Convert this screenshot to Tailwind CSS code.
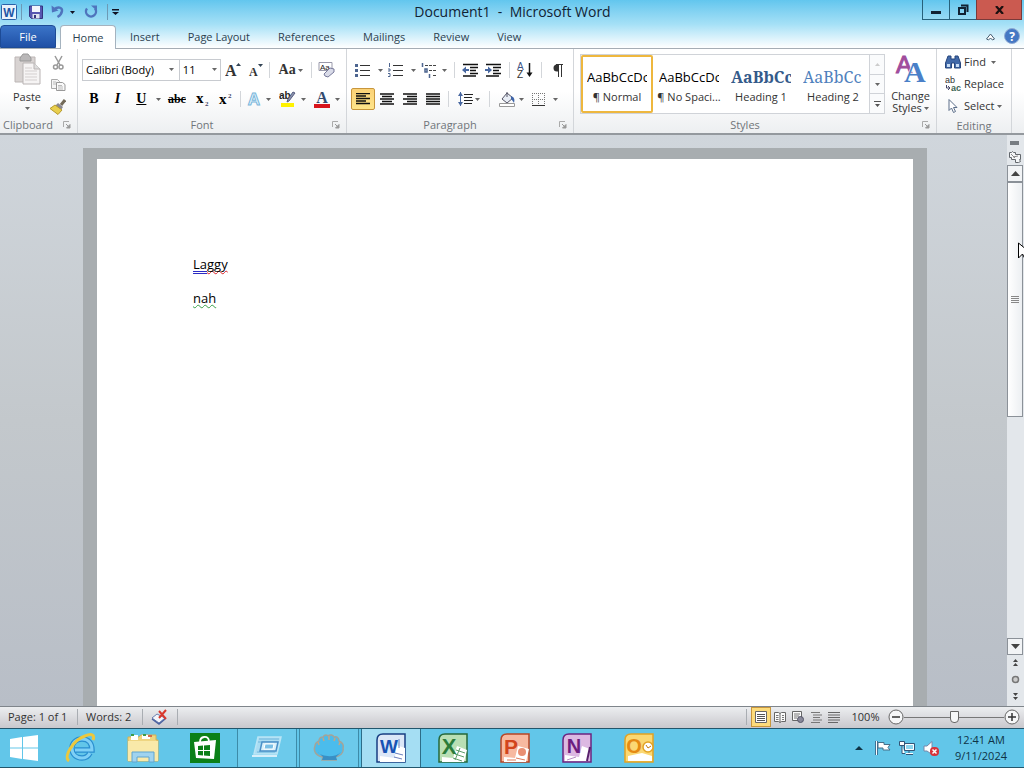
<!DOCTYPE html>
<html lang="en">
<head>
    <meta charset="UTF-8">
    <meta name="viewport" content="width=device-width, initial-scale=1.0">
    <title>Document1 - Microsoft Word</title>
    <script src="https://cdn.jsdelivr.net/npm/@tailwindcss/browser@4"></script>
</head>
<body class="h-screen flex flex-col overflow-hidden font-['Open_Sans','Noto_Sans',sans-serif] text-[11px] leading-4 text-[#333] bg-[#c5cad0]">

    <!-- Shared icons -->
    <svg class="hidden">
        <symbol id="caret" viewBox="0 0 5 3"><path d="M0 0h5L2.500 3z" fill="#666"/></symbol>
        <symbol id="launcher" viewBox="0 0 8 8"><path d="M.5 6V.5H6" fill="none" stroke="#aaa"/><path d="M3 3l3 3M7 3.500V7H3.500z" fill="#999" stroke="#999"/></symbol>
    </svg>

    <!-- Title bar and tabs -->
    <header class="shrink-0 bg-linear-to-b from-[#62c6ee] via-[#a4e0f6] to-white border-b border-[#a5adb5]">
        <div class="h-6 flex items-start">
            <div class="flex-1 h-6 flex items-center pl-px">
                <svg class="w-4 h-4" viewBox="0 0 16 16"><rect x=".5" y=".5" width="15" height="15" rx="1" fill="#e8f2fc" stroke="#2a62a8"/><text x="8" y="12.500" text-anchor="middle" font-family="Liberation Sans" font-weight="bold" font-size="12" fill="#1d56a5">W</text></svg>
                <span class="w-px h-4 ml-1 bg-[#6d9ab5]"></span>
                <button class="ml-1.5" aria-label="Save"><svg class="w-4 h-4" viewBox="0 0 16 16"><path d="M1.500 2h13v12.500h-11l-2-2z" fill="#5756b0" stroke="#34347e"/><path d="M4 2h8v6H4z" fill="#f2f5fc"/><path d="M4.500 10h7v4.500h-7z" fill="#dfe3ef"/><path d="M6 11h2v3H6z" fill="#34347e"/></svg></button>
                <button class="ml-1.5 flex items-center gap-1" aria-label="Undo"><svg class="w-4 h-4" viewBox="0 0 16 16"><path d="M4 5.500c4-3.500 8.500-2 8 1.500-.3 2.500-2 4.500-4.500 6" fill="none" stroke="#4f74bd" stroke-width="2.400"/><path d="M1.500 1.500l.5 7 6.500-2z" fill="#4f74bd"/></svg><svg class="w-[5px] h-[3px]"><path d="M0 0h5L2.500 3z" fill="#112"/></svg></button>
                <button class="ml-2" aria-label="Repeat"><svg class="w-4 h-4" viewBox="0 0 16 16"><path d="M4 4.500a5 5 0 1 0 8 0" fill="none" stroke="#4f74bd" stroke-width="2.400"/><path d="M8 1.500h6V7z" fill="#4f74bd"/></svg></button>
                <span class="w-px h-4 ml-2 bg-[#6d9ab5]"></span>
                <button class="ml-1" aria-label="Customize toolbar"><svg class="w-[7px] h-[6px]"><path d="M0 0h7v1.500H0zM0 3h7L3.500 6z" fill="#112"/></svg></button>
            </div>
            <h1 class="h-6 pt-px text-sm leading-[22px] text-[#123]">Document1&nbsp; -&nbsp; Microsoft Word</h1>
            <div class="flex-1 flex justify-end">
                <button class="w-7 h-5 border border-t-0 border-[#27617b] grid place-items-center" aria-label="Minimize"><svg class="w-[10px] h-[8px]"><path d="M0 5h10v3H0z" fill="#123"/></svg></button>
                <button class="w-[26px] h-5 border-b border-[#27617b] grid place-items-center" aria-label="Restore"><svg class="w-[11px] h-[11px]"><path d="M1 4h6v6H1zM3 1.500h6.500V8" fill="none" stroke="#123" stroke-width="2"/></svg></button>
                <button class="w-[46px] mr-0.5 h-5 border border-t-0 border-[#7a3a3a] bg-[#cb5a50] grid place-items-center" aria-label="Close"><svg class="w-[9px] h-[8px]"><path d="M1 0l7 8M8 0L1 8" stroke="#1c1010" stroke-width="2.200"/></svg></button>
            </div>
        </div>
        <nav class="h-6 flex items-stretch text-[#2c3f50]">
            <button class="w-14 mt-px mr-1 rounded-t-sm bg-linear-to-b from-[#3b74c8] to-[#1f50a6] border border-[#1d4b96] text-white">File</button>
            <button class="w-14 -mb-px mt-px rounded-t-sm bg-white border border-b-0 border-[#a5b3bf]">Home</button>
            <button class="px-[14px] pt-0.5">Insert</button>
            <button class="px-[14px] pt-0.5">Page Layout</button>
            <button class="px-[14px] pt-0.5">References</button>
            <button class="px-[14px] pt-0.5">Mailings</button>
            <button class="px-[14px] pt-0.5">Review</button>
            <button class="px-[14px] pt-0.5">View</button>
            <div class="ml-auto flex items-center gap-2 pr-1">
                <button aria-label="Minimize ribbon"><svg class="w-[11px] h-[9px]"><path d="M1.500 7L5.500 2l4 5-2 1-2-2-2 2z" fill="#fff" stroke="#445c70"/></svg></button>
                <button aria-label="Help"><svg class="w-4 h-4" viewBox="0 0 16 16"><circle cx="8" cy="8" r="7.500" fill="#4478c4" stroke="#8fa9d2"/><text x="8" y="12.500" text-anchor="middle" font-family="Open Sans" font-weight="bold" font-size="12" fill="#fff">?</text></svg></button>
            </div>
        </nav>
    </header>

    <!-- Ribbon -->
    <section class="h-[86px] shrink-0 flex bg-linear-to-b from-white from-50% to-[#edeff1] border-b-2 border-[#94999e]">

        <div class="w-[78px] flex flex-col border-r border-[#d3d6da]">
            <div class="flex-1 flex">
                <button class="w-[54px] flex flex-col items-center pt-1">
                    <svg class="w-7 h-8" viewBox="0 0 28 32"><path d="M2 4h20v25H2z" fill="#d8d3d2" stroke="#bcb6b5"/><path d="M7 5l3-4h5l3 4v3H7z" fill="#b9b7b8" stroke="#999"/><path d="M10 10h11l6 6v15H10z" fill="#f6f4f4" stroke="#b9b4b4"/><path d="M21 10v6h6" fill="#ddd" stroke="#b9b4b4"/><path d="M12 15h7M12 18h12M12 21h12M12 24h12M12 27h12" stroke="#d4cfcf"/></svg>
                    <span class="mt-1 leading-4">Paste</span>
                    <svg class="w-[5px] h-[3px] mt-0.5"><use href="#caret"/></svg>
                </button>
                <div class="flex flex-col gap-1.5 pt-1.5">
                    <button aria-label="Cut"><svg class="w-4 h-4 -ml-1" viewBox="0 0 16 16"><path d="M5 1l5 9M12 1L7 10" stroke="#999" stroke-width="1.500"/><circle cx="5.500" cy="12" r="2" fill="none" stroke="#999" stroke-width="1.500"/><circle cx="11" cy="12" r="2" fill="none" stroke="#999" stroke-width="1.500"/></svg></button>
                    <button aria-label="Copy"><svg class="w-4 h-4 -ml-1" viewBox="0 0 16 16"><path d="M1.500 2.500h6l2 2v7h-8z" fill="#f5f5f5" stroke="#aaa"/><path d="M6.500 5.500h6l2.500 2v6H6.500z" fill="#fafafa" stroke="#999"/><path d="M3 5h3M3 7h3M8 8.500h4M8 10h5M8 12h5" stroke="#bbb"/></svg></button>
                    <button aria-label="Format painter"><svg class="w-4 h-4 -ml-1" viewBox="0 0 16 16"><path d="M15 1l-4 5" stroke="#736a59" stroke-width="3"/><path d="M8 4l5 4-2 3-6-4z" fill="#8a8790"/><path d="M5 6l7 5-4 4.500-8-6z" fill="#e9cf4e" stroke="#b59a2e"/></svg></button>
                </div>
            </div>
            <div class="h-[17px] pt-px flex items-center justify-between pl-[3px] pr-1.5 text-[#70757a]">Clipboard<button aria-label="Clipboard options"><svg class="w-2 h-2"><use href="#launcher"/></svg></button></div>
        </div>

        <div class="w-[269px] flex flex-col border-r border-[#d3d6da]">
            <div class="flex-1 px-1 pt-[10px]">
                <div class="h-[22px] flex items-center">
                    <div class="relative w-[99px] h-[22px]">
                        <select aria-label="Font" class="appearance-none w-full h-full pl-[3px] border border-[#c8cbd0] bg-white text-black"><option>Calibri (Body)</option></select>
                        <svg class="absolute right-1.5 top-[9px] w-[5px] h-[3px] pointer-events-none"><use href="#caret"/></svg>
                    </div>
                    <div class="relative w-[42px] h-[22px]">
                        <select aria-label="Font size" class="appearance-none w-full h-full pl-[3px] border border-l-0 border-[#c8cbd0] bg-white text-black"><option>11</option></select>
                        <svg class="absolute right-1 top-[9px] w-[5px] h-[3px] pointer-events-none"><use href="#caret"/></svg>
                    </div>
                    <button class="w-6 grid place-items-center" aria-label="Grow font"><svg class="w-4 h-4"><text x="0" y="14" font-family="Liberation Serif" font-weight="bold" font-size="16" fill="#333">A</text><path d="M11 4l2.500-3L16 4z" fill="#345"/></svg></button>
                    <button class="w-6 pr-1 grid place-items-center" aria-label="Shrink font"><svg class="w-4 h-4"><text x="2" y="14" font-family="Liberation Serif" font-weight="bold" font-size="12" fill="#333">A</text><path d="M11 2h5l-2.500 3z" fill="#345"/></svg></button>
                    <span class="w-px h-4 bg-[#d3d6da]"></span>
                    <button class="w-[42px] flex items-center justify-center gap-0.5 font-['Liberation_Serif'] font-bold text-sm">Aa<svg class="w-[5px] h-[3px]"><use href="#caret"/></svg></button>
                    <span class="w-px h-4 bg-[#d3d6da]"></span>
                    <button class="w-[30px] grid place-items-center" aria-label="Clear formatting"><svg class="w-[18px] h-4"><text x="2" y="8" font-family="Liberation Sans" font-size="8" fill="#222">Aa</text><path d="M1 .5h13v8H1z" fill="none" stroke="#99a"/><path d="M6 12l6-6 4 1v3l-6 5-3-1z" fill="#d9dbe8" stroke="#77799a"/></svg></button>
                </div>
                <div class="h-[22px] mt-[7px] flex items-center font-['Liberation_Serif'] font-bold text-sm text-black">
                    <button class="w-6">B</button>
                    <button class="w-6 italic">I</button>
                    <button class="w-6 underline">U</button>
                    <button class="w-[10px] grid place-items-center" aria-label="Underline style"><svg class="w-[5px] h-[3px]"><use href="#caret"/></svg></button>
                    <button class="w-7 text-xs line-through">abc</button>
                    <button class="w-6 grid place-items-center" aria-label="Subscript"><svg class="w-4 h-4"><text x="1" y="12" font-size="15">x</text><text x="10" y="15" font-size="7" fill="#446">2</text></svg></button>
                    <button class="w-6 grid place-items-center" aria-label="Superscript"><svg class="w-4 h-4"><text x="1" y="13" font-size="15">x</text><text x="10" y="7" font-size="7" fill="#446">2</text></svg></button>
                    <span class="w-px h-4 mx-0.5 bg-[#d3d6da]"></span>
                    <button class="w-8 flex items-center justify-center gap-1" aria-label="Text effects"><svg class="w-4 h-4 overflow-visible"><text x="8" y="14" text-anchor="middle" font-family="Liberation Sans" font-size="17" fill="#e5f5ff" stroke="#7ab6da">A</text></svg><svg class="w-[5px] h-[3px]"><use href="#caret"/></svg></button>
                    <button class="w-9 flex items-center justify-center gap-1" aria-label="Highlight colour"><svg class="w-[18px] h-[18px]"><path d="M2 13h13v4H2z" fill="#fff200"/><text x="0" y="9" font-family="Liberation Sans" font-size="10" fill="#222">ab</text><path d="M16 3l-6 8-2 1 1-3 5-7z" fill="#8c93ad" stroke="#555c80"/></svg><svg class="w-[5px] h-[3px]"><use href="#caret"/></svg></button>
                    <button class="w-8 flex items-center justify-center gap-1" aria-label="Font colour"><svg class="w-[18px] h-[18px]"><text x="9" y="13" text-anchor="middle" font-size="16" fill="#33496e">A</text><path d="M1 14h16v4H1z" fill="#d8141c"/></svg><svg class="w-[5px] h-[3px]"><use href="#caret"/></svg></button>
                </div>
            </div>
            <div class="h-[17px] pt-px flex items-center pr-1.5 text-[#70757a]"><span class="flex-1 pr-1.5 text-center">Font</span><button aria-label="Font options"><svg class="w-2 h-2"><use href="#launcher"/></svg></button></div>
        </div>

        <div class="w-[227px] flex flex-col border-r border-[#d3d6da]">
            <div class="flex-1 px-1 pt-[10px]">
                <div class="h-[22px] flex items-center">
                    <button class="w-[34px] pl-1 flex items-center gap-2" aria-label="Bullets"><svg class="w-[15px] h-[14px] shrink-0"><path d="M5 2.500h10M5 7.500h10M5 12.500h10" stroke="#333"/><path d="M0 1h3v3H0zM0 6h3v3H0zM0 11h3v3H0z" fill="#4d6590"/></svg><svg class="w-[5px] h-[3px]"><use href="#caret"/></svg></button>
                    <button class="w-[34px] pl-1 flex items-center gap-2" aria-label="Numbering"><svg class="w-[15px] h-[14px] shrink-0"><path d="M5 2.500h10M5 7.500h10M5 12.500h10" stroke="#333"/><path d="M1.500 0v4M0 6h2v2H0M0 10.500h2v3H0" fill="none" stroke="#4d6590"/></svg><svg class="w-[5px] h-[3px]"><use href="#caret"/></svg></button>
                    <button class="w-[34px] pl-1 flex items-center gap-1" aria-label="Multilevel list"><svg class="w-[17px] h-[15px] shrink-0"><path d="M4 2.500h12M8 7.500h8M12 12.500h4" stroke="#444" stroke-dasharray="3 1"/><path d="M1.500 0v4M4 6h2v3H4zM8.500 11v4" fill="none" stroke="#4d6590" stroke-width="1.500"/></svg><svg class="w-[5px] h-[3px]"><use href="#caret"/></svg></button>
                    <span class="w-px h-4 mx-1 bg-[#d3d6da]"></span>
                    <button class="w-6 grid place-items-center" aria-label="Decrease indent"><svg class="w-4 h-[14px]"><path d="M1 1.500h15M8 4.500h8M8 7.500h6M8 10.500h8M1 13h13" stroke="#111" stroke-width="1.500"/><path d="M0 7l4-3.500V6h3v2H4v2.500z" fill="#4767a0"/></svg></button>
                    <button class="w-6 grid place-items-center" aria-label="Increase indent"><svg class="w-4 h-[14px]"><path d="M1 1.500h15M8 4.500h8M8 7.500h6M8 10.500h8M1 13h13" stroke="#111" stroke-width="1.500"/><path d="M7 7L3 3.500V6H0v2h3v2.500z" fill="#4767a0"/></svg></button>
                    <span class="w-px h-4 mx-1 bg-[#d3d6da]"></span>
                    <button class="w-6 grid place-items-center" aria-label="Sort"><svg class="w-4 h-4 overflow-visible"><text x="0" y="8" font-family="Liberation Sans" font-size="10" fill="#3e5686">A</text><text x="0" y="16" font-family="Liberation Sans" font-size="10" fill="#333">Z</text><path d="M12.500 1v12" stroke="#111" stroke-width="1.500"/><path d="M9.500 10.500h6l-3 4.500z" fill="#111"/></svg></button>
                    <span class="w-px h-4 mx-1 bg-[#d3d6da]"></span>
                    <button class="w-6 grid place-items-center" aria-label="Show marks"><svg class="w-[11px] h-[13px]"><path d="M10.500.5H5a3.500 3.500 0 0 0 0 7h1V.5z" fill="#333"/><path d="M6.500 0v13M9.500 0v13M4 .5h7" stroke="#333"/></svg></button>
                </div>
                <div class="h-[22px] mt-[7px] flex items-center">
                    <button class="w-6 h-[22px] rounded-xs border border-[#c8963c] bg-linear-to-b from-[#fbd277] to-[#ffe58a] grid place-items-center" aria-label="Align left"><svg class="w-[14px] h-[12px]"><path d="M0 .5h14M0 3h10M0 5.500h14M0 8h10M0 10.500h14" stroke="#111" stroke-width="1.300"/></svg></button>
                    <button class="w-[23px] grid place-items-center" aria-label="Center"><svg class="w-[14px] h-[12px]"><path d="M0 1h14M2 3.500h10M0 6h14M2 8.500h10M0 11h14" stroke="#111" stroke-width="1.300"/></svg></button>
                    <button class="w-[23px] grid place-items-center" aria-label="Align right"><svg class="w-[14px] h-[12px]"><path d="M0 1h14M4 3.500h10M0 6h14M4 8.500h10M0 11h14" stroke="#111" stroke-width="1.300"/></svg></button>
                    <button class="w-[23px] grid place-items-center" aria-label="Justify"><svg class="w-[14px] h-[12px]"><path d="M0 1h14M0 3.500h14M0 6h14M0 8.500h14M0 11h14" stroke="#111" stroke-width="1.300"/></svg></button>
                    <span class="w-px h-4 mx-1 bg-[#d3d6da]"></span>
                    <button class="w-8 flex items-center justify-center gap-0.5" aria-label="Line spacing"><svg class="w-[15px] h-4"><path d="M6 3.500h9M6 6.500h8M6 9.500h9M6 12.500h8" stroke="#222"/><path d="M2.500 1v14" stroke="#4767a0"/><path d="M0 5l2.500-4L5 5zM0 11h5l-2.500 4z" fill="#4767a0"/></svg><svg class="w-[5px] h-[3px]"><use href="#caret"/></svg></button>
                    <span class="w-px h-4 mx-1 bg-[#d3d6da]"></span>
                    <button class="w-[34px] flex items-center justify-center gap-1" aria-label="Shading"><svg class="w-4 h-4"><path d="M3 8l5-6 6 5-6 5z" fill="#e8edf5" stroke="#556"/><path d="M8 1v5" stroke="#556"/><path d="M12 5c3 1 4 3 3 7-1-2-2-3-3-4z" fill="#3e64a8"/><path d="M.5 12.500h15v3H.5z" fill="#fff" stroke="#999"/></svg><svg class="w-[5px] h-[3px]"><use href="#caret"/></svg></button>
                    <button class="w-[34px] flex items-center justify-center gap-2" aria-label="Borders"><svg class="w-[13px] h-[13px]"><path d="M.5 0v12M6.500 0v12M12.500 0v12M0 .5h13M0 6.500h13" stroke="#777" stroke-dasharray="1 1"/><path d="M0 12.500h13" stroke="#333"/></svg><svg class="w-[5px] h-[3px]"><use href="#caret"/></svg></button>
                </div>
            </div>
            <div class="h-[17px] pt-px flex items-center pr-1.5 text-[#70757a]"><span class="flex-1 pr-1.5 text-center">Paragraph</span><button aria-label="Paragraph options"><svg class="w-2 h-2"><use href="#launcher"/></svg></button></div>
        </div>

        <div class="w-[363px] flex flex-col border-r border-[#d3d6da]">
            <div class="flex-1 flex pl-1.5 pt-[5px]">
                <div class="w-[305px] h-[60px] flex items-stretch border border-[#d0d3d8] bg-white text-[#333]">
                    <button class="w-[72px] border-2 border-[#eeb73e] rounded-xs pt-0.5">
                        <span class="block mx-[4px] h-6 overflow-hidden whitespace-nowrap text-left text-[13px] leading-6 text-black">AaBbCcDc</span>
                        <span class="block whitespace-nowrap">¶ Normal</span>
                    </button>
                    <button class="w-[72px] pt-0.5">
                        <span class="block mx-1.5 h-6 overflow-hidden whitespace-nowrap text-left text-[13px] leading-6 text-black">AaBbCcDc</span>
                        <span class="block whitespace-nowrap">¶ No Spaci...</span>
                    </button>
                    <button class="w-[72px] pt-0.5">
                        <span class="block mx-1.5 h-6 overflow-hidden whitespace-nowrap text-left font-['Noto_Serif','DejaVu_Serif',serif] font-bold text-base leading-6 text-[#345a8a]">AaBbCc</span>
                        <span class="block whitespace-nowrap">Heading 1</span>
                    </button>
                    <button class="w-[72px] pt-0.5">
                        <span class="block mx-1.5 h-6 overflow-hidden whitespace-nowrap text-left font-['Noto_Serif','DejaVu_Serif',serif] text-base leading-6 text-[#4f81bd]">AaBbCc</span>
                        <span class="block whitespace-nowrap">Heading 2</span>
                    </button>
                    <div class="flex-1 flex flex-col border-l border-[#d0d3d8] divide-y divide-[#d0d3d8] bg-[#fafbfc]">
                        <button class="flex-1 grid place-items-center" aria-label="Previous styles"><svg class="w-[5px] h-[3px]"><path d="M0 3h5L2.500 0z" fill="#ccc"/></svg></button>
                        <button class="flex-1 grid place-items-center" aria-label="Next styles"><svg class="w-[5px] h-[3px]"><use href="#caret"/></svg></button>
                        <button class="flex-1 grid place-items-center" aria-label="More styles"><svg class="w-[7px] h-[6px]"><path d="M0 0h7v1H0zM1 3h5L3.500 6z" fill="#555"/></svg></button>
                    </div>
                </div>
                <button class="flex-1 flex flex-col items-center leading-3">
                    <svg class="w-8 h-[30px] overflow-visible"><text x="1" y="19" font-family="Liberation Sans" font-size="24" fill="#a04c9c" stroke="#a04c9c">A</text><text x="9" y="28" font-family="Liberation Serif" font-weight="bold" font-size="30" fill="#4a80c8" stroke="#fff" paint-order="stroke">A</text></svg>
                    <span class="mt-1.5">Change</span>
                    <span class="flex items-center gap-0.5">Styles<svg class="w-[5px] h-[3px]"><use href="#caret"/></svg></span>
                </button>
            </div>
            <div class="h-[17px] pt-px flex items-center pr-1.5 text-[#70757a]"><span class="flex-1 pr-1.5 text-center">Styles</span><button aria-label="Style options"><svg class="w-2 h-2"><use href="#launcher"/></svg></button></div>
        </div>

        <div class="w-[75px] flex flex-col border-r border-[#d3d6da]">
            <div class="flex-1 flex flex-col pl-2 pt-0.5">
                <button class="h-[22px] flex items-center gap-[3px]"><svg class="w-4 h-4" viewBox="0 0 16 16"><path d="M3 2h3v3h4V2h3l2.500 7v5H9.500V9h-3v5H.5V9z" fill="#4169a8" stroke="#27467c"/><path d="M2 10h3v3H2zM11 10h3v3h-3z" fill="#c7dcf5"/></svg>Find<svg class="w-[5px] h-[3px] ml-0.5"><use href="#caret"/></svg></button>
                <button class="h-[22px] flex items-center gap-[3px]"><svg class="w-4 h-4" viewBox="0 0 16 16"><text x="0" y="7" font-family="Liberation Sans" font-size="9" fill="#333">ab</text><text x="6" y="15" font-family="Liberation Sans" font-weight="bold" font-size="9" fill="#3d6655">ac</text><path d="M1.500 9v3h3M3 10l2 2-2 2" fill="none" stroke="#446"/></svg>Replace</button>
                <button class="h-[22px] flex items-center gap-[3px]"><svg class="w-4 h-4" viewBox="0 0 16 16"><path d="M4 1.500v11l2.500-2.500 2 4.500 2-1-2-4H12z" fill="#fff" stroke="#5c6f8a"/></svg>Select<svg class="w-[5px] h-[3px]"><use href="#caret"/></svg></button>
            </div>
            <div class="h-[17px] leading-[17px] text-center text-[#70757a]">Editing</div>
        </div>
    </section>

    <!-- Document area -->
    <main class="flex-1 min-h-0 flex">
        <div class="flex-1 overflow-hidden flex justify-center pl-[3px] pt-[13px] bg-linear-to-b from-[#d0d6dc] via-[#c3c8cc] to-[#b8bec7]">
            <div class="w-full max-w-[844px] px-[14px] pt-[11px] bg-[#a8adb0]">
                <article class="h-full bg-white px-24 pt-[94px] text-[13px] leading-[22px] text-black [text-decoration-skip-ink:none]">
                    <p class="mb-3"><span class="underline decoration-double decoration-[#2b2bc4] decoration-1 underline-offset-2">La</span><span class="underline decoration-wavy decoration-[#d8202a] decoration-1 underline-offset-1">ggy</span></p>
                    <p><span class="underline decoration-wavy decoration-[#38a048] decoration-1 underline-offset-1">nah</span></p>
                </article>
            </div>
        </div>
        <aside class="w-[17px] flex flex-col items-start pt-1.5 bg-[#e3e7eb]">
            <div class="w-[9px] h-1 mx-[3px] bg-[#777c82]"></div>
            <button class="mt-[3px] mx-0.5 h-[17px]" aria-label="Ruler"><svg class="w-3 h-3" viewBox="0 0 12 12"><path d="M.5 1.500h2l1-1 1 1h2v2h5v5h-1l1 2-2 1h-3v-3h-4v-2h-2z" fill="#f4f6f8" stroke="#62676c"/><path d="M2 3l4 4M4 6l5-1" stroke="#888"/></svg></button>
            <button class="w-4 h-[17px] border border-[#8b9198] bg-[#f2f4f6] grid place-items-center" aria-label="Scroll up"><svg class="w-[9px] h-[5px]"><path d="M0 5h9L4.500 0z" fill="#444"/></svg></button>
            <div class="w-4 h-[235px] border border-[#8b9198] bg-linear-to-r from-white to-[#eceff2] grid place-items-center"><svg class="w-2 h-[7px]"><path d="M0 .5h8M0 2.500h8M0 4.500h8M0 6.500h8" stroke="#888"/></svg></div>
            <div class="flex-1"></div>
            <button class="w-4 h-[17px] border border-[#8b9198] bg-[#f2f4f6] grid place-items-center" aria-label="Scroll down"><svg class="w-[9px] h-[5px]"><path d="M0 0h9L4.500 5z" fill="#444"/></svg></button>
            <button class="w-4 h-[17px] pb-0.5 grid place-items-center" aria-label="Previous page"><svg class="w-[5px] h-[7px]"><path d="M0 3h5L2.500 0zM0 7h5L2.500 4z" fill="#444"/></svg></button>
            <button class="w-4 h-[17px] pb-0.5 grid place-items-center" aria-label="Browse object"><svg class="w-[9px] h-[9px]"><circle cx="4.500" cy="4.500" r="3" fill="#ccc" stroke="#777" stroke-width="1.500"/></svg></button>
            <button class="w-4 h-[17px] pb-0.5 grid place-items-center" aria-label="Next page"><svg class="w-[5px] h-[7px]"><path d="M0 0h5L2.500 3zM0 4h5L2.500 7z" fill="#444"/></svg></button>
        </aside>
    </main>

    <!-- Status bar -->
    <footer class="h-[22px] pb-px shrink-0 flex items-center border-t border-[#7f858b] bg-linear-to-b from-[#eceef0] to-[#c9c8cd] text-[#333]">
        <span class="w-[78px] pl-2 border-r border-[#a9adb2]">Page: 1 of 1</span>
        <span class="w-[65px] pl-2 border-r border-[#a9adb2]">Words: 2</span>
        <button class="w-[35px] h-4 grid place-items-center border-r border-[#a9adb2]" aria-label="Proofing"><svg class="w-[18px] h-4"><path d="M1 9l5-4 8 4-6 5z" fill="#f3f5fa" stroke="#6b7fb0"/><path d="M1 10l7 5 6-5" fill="none" stroke="#4b62a0" stroke-width="1.500"/><path d="M8 2l7 8M15 1L8 9" stroke="#d9382c" stroke-width="2"/></svg></button>
        <div class="ml-auto flex items-center">
            <span class="w-px h-4 mr-1 bg-[#a9adb2]"></span>
            <button class="w-5 h-5 border border-[#c8963c] bg-[#fddc7c] grid place-items-center" aria-label="Print layout"><svg class="w-3 h-3"><path d="M.5.5h11v11H.5z" fill="#fff" stroke="#666"/><path d="M2 3.500h8M2 5.500h8M2 7.500h8M2 9.500h8" stroke="#555"/></svg></button>
            <button class="w-[18px] grid place-items-center" aria-label="Reading view"><svg class="w-3 h-3"><path d="M.5 1.500h4l1.500 1 1.500-1h4v9h-4L6 11.500l-1.500-1h-4zM6 2.500v9" fill="#fafafa" stroke="#666"/><path d="M2 4.500h2.500M2 6.500h2.500M2 8.500h2.500M8 4.500h2M8 6.500h2M8 8.500h2" stroke="#777"/></svg></button>
            <button class="w-[18px] grid place-items-center" aria-label="Web layout"><svg class="w-3 h-3"><path d="M.5.5h9v9h-9z" fill="#fafafa" stroke="#666"/><path d="M2 3h6M2 5h5M2 7h3" stroke="#777"/><circle cx="8.500" cy="8.500" r="3" fill="#889" stroke="#556"/></svg></button>
            <button class="w-[18px] grid place-items-center" aria-label="Outline"><svg class="w-3 h-3"><path d="M1 1.500h9M3 4h9M3 6.500h7M3 9h9M1 11.500h9" stroke="#777"/></svg></button>
            <button class="w-[18px] grid place-items-center" aria-label="Draft"><svg class="w-3 h-3"><path d="M0 1.500h12M0 4h12M0 6.500h12M0 9h12M0 11.500h10" stroke="#666"/></svg></button>
            <span class="w-[45px] text-center">100%</span>
            <button aria-label="Zoom out"><svg class="w-4 h-4"><circle cx="8" cy="8" r="7" fill="#f6f7f8" stroke="#666"/><path d="M4 8h8" stroke="#333" stroke-width="1.500"/></svg></button>
            <input type="range" min="0" max="100" value="50" aria-label="Zoom" class="appearance-none w-[100px] h-3 bg-[linear-gradient(#777,#777),linear-gradient(#888,#888)] bg-[size:100%_1px,1px_7px] bg-center bg-no-repeat [&::-webkit-slider-thumb]:appearance-none [&::-webkit-slider-thumb]:w-[9px] [&::-webkit-slider-thumb]:h-3 [&::-webkit-slider-thumb]:border [&::-webkit-slider-thumb]:border-[#666] [&::-webkit-slider-thumb]:rounded-b [&::-webkit-slider-thumb]:bg-[#f6f7f8]">
            <button class="pr-1" aria-label="Zoom in"><svg class="w-4 h-4"><circle cx="8" cy="8" r="7" fill="#f6f7f8" stroke="#666"/><path d="M4 8h8M8 4v8" stroke="#333" stroke-width="1.500"/></svg></button>
        </div>
    </footer>

    <!-- Taskbar -->
    <nav class="h-10 shrink-0 flex items-stretch border-t border-b border-[#22566c] bg-[#62c6e9]">
        <button class="w-[51px] pr-1 grid place-items-center" aria-label="Start"><svg class="w-7 h-[26px]" viewBox="0 0 28 26"><path d="M0 4l12-2v10.500H0zM13 2l15-2v12.500H13zM0 13.500h12V24L0 22zM13 13.500h15V26l-15-2z" fill="#fff"/></svg></button>
        <div class="flex gap-0.5">
            <button class="w-[60px] grid place-items-center" aria-label="Internet Explorer"><svg class="w-8 h-8" viewBox="0 0 32 32"><path d="M25 21c-2 4-5 5-8 5-6 0-10-4-10-9.500S11 7 17 7s10 4 10 11H10" fill="none" stroke="#2a8fd0" stroke-width="5.500"/><path d="M25 21c-2 4-5 5-8 5-6 0-10-4-10-9.500S11 7 17 7s10 4 10 11H10" fill="none" stroke="#7fd0f6" stroke-width="3"/><path d="M4 29C-2 25 8 8 20 4c7-3 10-1 8 4" fill="none" stroke="#ecc83c" stroke-width="3"/></svg></button>
            <button class="w-[60px] grid place-items-center" aria-label="File Explorer"><svg class="w-8 h-8" viewBox="0 0 32 32"><path d="M1 5h11l2-2h15v5h2v21H1z" fill="#efd581" stroke="#d6b353"/><path d="M4 3h7v5H4zM15 3h8v4h-8z" fill="#fff"/><path d="M4 3h3M16 3h3" stroke="#3d9c4a" stroke-width="2"/><path d="M21 4h4" stroke="#d66b4a" stroke-width="2"/><path d="M1 9h30v20H1z" fill="#f9e9a9"/><path d="M5 30V20h22v10h-5v-5H10v5z" fill="#9fd3ef" stroke="#5fa5d0"/></svg></button>
            <button class="w-[60px] grid place-items-center" aria-label="Store"><svg class="w-[30px] h-[30px]" viewBox="0 0 30 30"><path d="M0 0h30v30H0z" fill="#0b8018"/><path d="M4 9l22-2-2 19L6 25z" fill="#fff"/><path d="M10 9c0-6 8-7 9-1" fill="none" stroke="#fff" stroke-width="1.800"/><path d="M8 13l5-.5V17H8zM14 12.500l6-.5v5h-6zM8 18h5v4.500L8 22zM14 18h6v5l-6-.5z" fill="#0b8018"/></svg></button>
            <button class="w-[60px] grid place-items-center border-x border-[#3d8ba8] bg-[#6ccaeb]" aria-label="Run"><svg class="w-8 h-7" viewBox="0 0 32 28"><path d="M7 3h23l-4 17H3z" fill="#a9dcf2" stroke="#b9e5f6" stroke-width="1.500"/><path d="M8 5h20M7 8h20M6 18h18" stroke="#6fb5dc"/><path d="M11 8h16l-2 9H9z" fill="#d8f0fa" stroke="#4a90c8" stroke-width="1.500"/><path d="M14 10h9l-1 5h-9z" fill="#79bfe5" stroke="#fff"/><path d="M1 22h25" stroke="#d6effa" stroke-width="2"/></svg></button>
            <button class="w-[60px] grid place-items-center border-x border-[#3d8ba8] bg-[#6ccaeb]" aria-label="Classic Shell"><svg class="w-8 h-7" viewBox="0 0 32 28"><path d="M10 23C3 22 0 17 2 12c0-3 2-4 4-5 0-3 2-4 4-4 2-3 4-2 5-1 2-2 5-1 6 1 3-1 5 1 5 4 3 1 5 4 4 7 1 5-3 8-8 9l1 3H9z" fill="#4bbcec" stroke="#a3a49a" stroke-width="1.500"/><path d="M5 18c3 5 18 6 23 0l-5 5 1 3H9l1-3z" fill="#398fc4"/><path d="M5 8l1 3M10 4l1 3M16 2v4M22 4l-1 3M27 8l-1 3" stroke="#c2a685" stroke-width="1.500"/></svg></button>
            <button class="w-[60px] grid place-items-center border-x border-[#2c6d88] bg-[#a5def3]" aria-label="Word"><svg class="w-[30px] h-[30px]" viewBox="0 0 30 30"><path d="M7 1h22v28H1V7q0-6 6-6z" fill="#dbe7f7" stroke="#183e82" stroke-width="1.500"/><path d="M20 12l9 3v14H4v-6l15 2z" fill="#fff"/><path d="M19 20l8 2M18 24l8 2M23 6v9" stroke="#6b80bd"/><text x="13" y="20" text-anchor="middle" font-family="Liberation Sans" font-weight="bold" font-size="19" fill="#1753b4">W</text></svg></button>
            <button class="w-[60px] grid place-items-center" aria-label="Excel"><svg class="w-[30px] h-[30px]" viewBox="0 0 30 30"><path d="M7 1h22v28H1V7q0-6 6-6z" fill="#b9dfb4" stroke="#26683a" stroke-width="1.500"/><path d="M19 13l10 4-3 12H4v-5l11 1z" fill="#fff"/><path d="M18 17l9 3M17 21l9 3M15 25l9 3M22 15l-5 12" stroke="#5d9e6a"/><text x="11" y="21" text-anchor="middle" font-family="Liberation Sans" font-weight="bold" font-size="22" fill="#2b7c3b">X</text></svg></button>
            <button class="w-[60px] grid place-items-center" aria-label="PowerPoint"><svg class="w-[30px] h-[30px]" viewBox="0 0 30 30"><path d="M7 1h22v28H1V7q0-6 6-6z" fill="#f7b9a0" stroke="#b84524" stroke-width="1.500"/><path d="M18 13l11 3-3 13H4v-5l11 1z" fill="#fff"/><circle cx="22" cy="19" r="4" fill="#e98f72"/><path d="M16 25l9 2M7 27h9" stroke="#e07a58"/><text x="11" y="21" text-anchor="middle" font-family="Liberation Sans" font-weight="bold" font-size="21" fill="#d2451c">P</text></svg></button>
            <button class="w-[60px] grid place-items-center" aria-label="OneNote"><svg class="w-[30px] h-[30px]" viewBox="0 0 30 30"><path d="M7 1h22v28H1V7q0-6 6-6z" fill="#dcb8e2" stroke="#6b2480" stroke-width="1.500"/><path d="M20 13l8 3-2 12H3v-6l14 2z" fill="#fff"/><path d="M28 14l-3 14" stroke="#58206b" stroke-width="2"/><path d="M5 27l9-3" stroke="#b890c4"/><text x="12" y="20" text-anchor="middle" font-family="Liberation Sans" font-weight="bold" font-size="20" fill="#6c1d80">N</text></svg></button>
            <button class="w-[60px] grid place-items-center" aria-label="Outlook"><svg class="w-[30px] h-[30px]" viewBox="0 0 30 30"><path d="M7 1h22v28H1V7q0-6 6-6z" fill="#fbd873" stroke="#e2a223" stroke-width="1.500"/><path d="M4 23l14-3 10 3v5H4z" fill="#fff"/><circle cx="24" cy="14" r="5" fill="#fff" stroke="#e2a223" stroke-width="1.500"/><path d="M22 12l2 3 3-2" fill="none" stroke="#c47c12"/><text x="10" y="20" text-anchor="middle" font-family="Liberation Sans" font-weight="bold" font-size="20" fill="#e58a12">O</text></svg></button>
        </div>
        <div class="ml-auto flex items-center gap-2 pr-[17px] text-[#0e3346]">
            <button class="mr-1" aria-label="Show hidden icons"><svg class="w-2 h-1"><path d="M0 4h8L4 0z" fill="#0e3346"/></svg></button>
            <svg class="w-4 h-4" viewBox="0 0 16 16"><path d="M1.500 1v14" stroke="#357" stroke-width="2.500"/><path d="M1.500 1v14" stroke="#fff"/><path d="M3 2.500h6v2h6l-2 3 2 2.500H8V8H3z" fill="#fff" stroke="#47708a"/></svg>
            <svg class="w-4 h-4" viewBox="0 0 16 16"><path d="M5.500 3.500h10v7h-10zM10 10.500v3M7 14.500h7" fill="#8ed6ee" stroke="#357"/><path d="M6.500 4.500h8v5h-8zM7 13.500h7" fill="none" stroke="#fff"/><path d="M.5 1.500h5v4h-5zM3 5.500v8h3" fill="#fff" stroke="#357"/></svg>
            <svg class="w-4 h-4" viewBox="0 0 16 16"><path d="M1 6h3l5-4.500v13L4 11H1z" fill="#fff" stroke="#78a"/><rect x="7" y="7" width="9" height="9" rx="4" fill="#d8333a"/><path d="M9.500 9.500l4 4M13.500 9.500l-4 4" stroke="#fff" stroke-width="1.500"/></svg>
            <div class="pl-2 text-center leading-4"><div>12:41 AM</div><div>9/11/2024</div></div>
        </div>
    </nav>

    <!-- Mouse pointer -->
    <svg class="absolute right-0 top-[242px] w-1.5 h-5 pointer-events-none"><path d="M.5 1v15l4-4 3 6 3-1-3-6h5z" fill="#fff" stroke="#000"/></svg>
</body>
</html>
